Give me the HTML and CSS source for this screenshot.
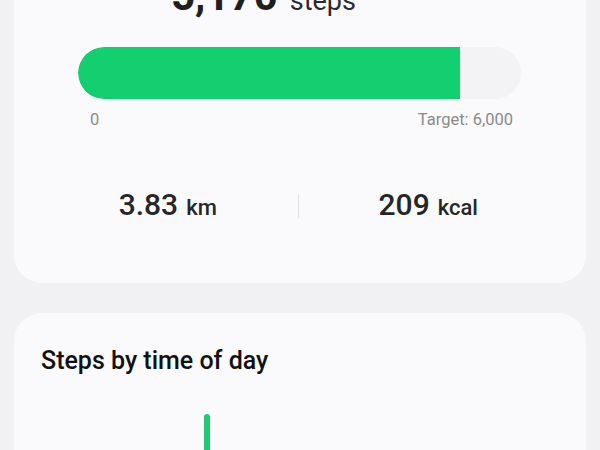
FILE: index.html
```html
<!DOCTYPE html>
<html>
<head>
<meta charset="utf-8">
<link rel="stylesheet" href="styles.css">
</head>
<body>
<div class="page">
  <section class="card summary">
    <div class="total"><span class="total-num">5,170</span><span class="total-unit">steps</span></div>
    <div class="track"><div class="fill" style="width:86.2%"></div></div>
    <div class="range"><span>0</span><span>Target: 6,000</span></div>
    <div class="stats">
      <div class="stat"><span class="stat-num">3.83</span><span class="stat-unit">km</span></div>
      <div class="divider"></div>
      <div class="stat"><span class="stat-num">209</span><span class="stat-unit">kcal</span></div>
    </div>
  </section>
  <section class="card daily">
    <h2 class="title">Steps by time of day</h2>
    <div class="chart">
      <div class="col"></div><div class="col"></div><div class="col"></div><div class="col"></div>
      <div class="col"></div><div class="col"></div><div class="col"></div>
      <div class="col"><div class="bar" style="height:60px"></div></div>
      <div class="col"></div><div class="col"></div><div class="col"></div><div class="col"></div>
      <div class="col"></div><div class="col"></div><div class="col"></div><div class="col"></div>
      <div class="col"></div><div class="col"></div><div class="col"></div><div class="col"></div>
      <div class="col"></div><div class="col"></div><div class="col"></div><div class="col"></div>
    </div>
  </section>
</div>
</body>
</html>
```
FILE: styles.css
```css
* { box-sizing: border-box; }
html, body { margin: 0; padding: 0; }
body {
  background: #f1f1f3;
  font-family: Roboto, "Noto Sans", sans-serif;
  color: #1f1f1f;
  overflow: hidden;
  height: 450px;
}
.page {
  padding: 0 14px;
  display: flex;
  flex-direction: column;
  gap: 30px;
}
.card {
  background: #fafafc;
  border-radius: 28px;
}
.summary {
  margin-top: -60px;
  padding: 31px 0 59px;
}
.total {
  height: 50px;
  line-height: 50px;
  display: flex;
  justify-content: flex-start;
  align-items: baseline;
  gap: 12px;
  padding-left: 157px;
}
.total-num { font-size: 42px; font-weight: 700; }
.total-unit { font-size: 27px; font-weight: 400; color: #2a2a2a; }
.track {
  margin: 26px 65px 0 64px;
  height: 52px;
  border-radius: 26px;
  background: #f3f3f5;
  overflow: hidden;
}
.fill {
  height: 100%;
  background: #13cf6f;
  border-radius: 26px 0 0 26px;
}
.range {
  margin: 11px 73px 0 76px;
  display: flex;
  justify-content: space-between;
  font-size: 16.5px;
  line-height: 20px;
  color: #8a8a8a;
}
.stats {
  margin: 58px 28px 0 24px;
  display: flex;
  align-items: center;
  height: 36px;
}
.stat {
  flex: 1;
  display: flex;
  justify-content: center;
  align-items: baseline;
  gap: 8px;
  line-height: 36px;
}
.stat-num { font-size: 30px; font-weight: 500; color: #262626; }
.stat-unit { font-size: 22px; font-weight: 500; color: #262626; }
.divider {
  width: 1px;
  height: 24px;
  background: #e2e2e4;
}
.daily {
  padding: 33px 27px 40px;
  height: 200px;
}
.title {
  margin: 0;
  font-size: 25px;
  font-weight: 500;
  line-height: 30px;
  color: #111;
}
.chart {
  margin-top: 38px;
  display: grid;
  grid-template-columns: repeat(24, 1fr);
  align-items: start;
  height: 80px;
}
.col {
  display: flex;
  justify-content: center;
}
.bar {
  width: 6px;
  background: #1fcb72;
  border-radius: 3px;
  margin-left: 8px;
}
```
